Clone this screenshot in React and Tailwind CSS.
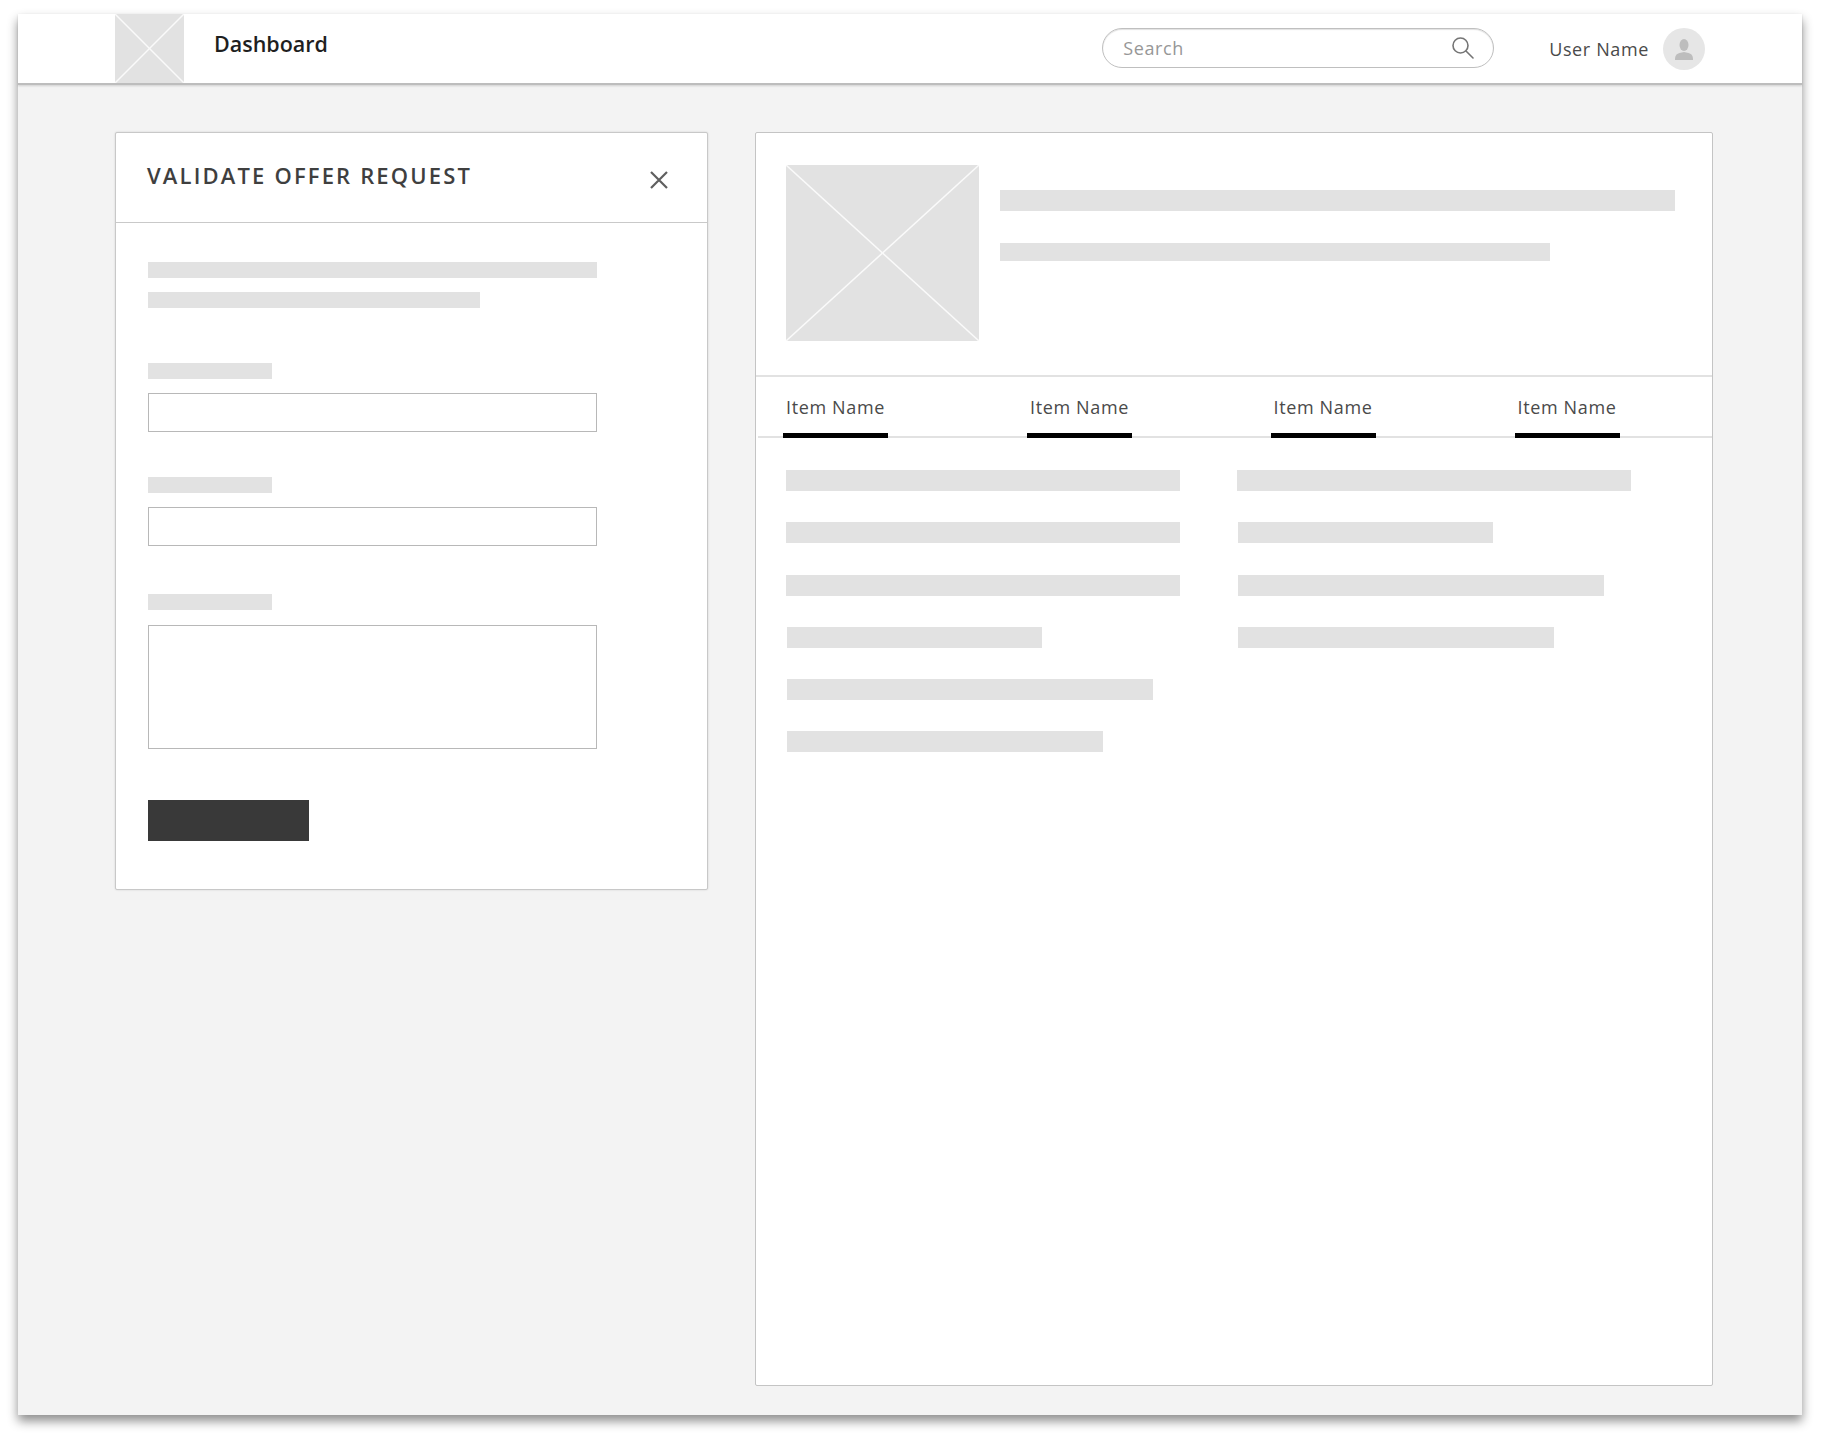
const ImagePlaceholder = ({ className }) => (
  <div className={`bg-[#e2e2e2] shrink-0 ${className}`}>
    <svg className="w-full h-full block" viewBox="0 0 100 100" preserveAspectRatio="none">
      <line x1="0" y1="0" x2="100" y2="100" stroke="#fafafa" strokeWidth="1.5" vectorEffect="non-scaling-stroke" />
      <line x1="100" y1="0" x2="0" y2="100" stroke="#fafafa" strokeWidth="1.5" vectorEffect="non-scaling-stroke" />
    </svg>
  </div>
)

const Bar = ({ className }) => <div className={`bg-[#e2e2e2] ${className}`}></div>

const tabs = [
  { name: 'Item Name', margin: 'ml-[25px]' },
  { name: 'Item Name', margin: 'ml-[139px]' },
  { name: 'Item Name', margin: 'ml-[138.5px]' },
  { name: 'Item Name', margin: 'ml-[139px]' },
]

const leftRows = ['w-[394px]', 'w-[394px]', 'w-[394px]', 'ml-px w-[255px]', 'ml-px w-[366px]', 'ml-px w-[316px]']
const rightRows = ['w-[394px]', 'ml-px w-[255px]', 'ml-px w-[366px]', 'ml-px w-[316px]']

const App = () => {
  return (
    <div className="w-[1821px] h-[1433px] bg-white pt-[14px] pl-[18px] overflow-hidden font-['Open_Sans',sans-serif]">
      <div className="w-[1784px] h-[1401px] bg-[#f3f3f3] shadow-[0_6px_10px_rgba(0,0,0,0.45)]">
        <header className="h-[71px] bg-white border-b-2 border-[#bdbdbd] shadow-[0_1px_2px_rgba(0,0,0,0.15)] flex items-start pl-[97px] pr-[97px]">
          <ImagePlaceholder className="w-[69px] h-[69px]" />
          <h1 className="ml-[30px] mt-[15px] text-[21.5px] leading-[30px] font-semibold text-[#1f1f1f]">Dashboard</h1>
          <div className="ml-auto mt-[14px] w-[392px] h-[40px] rounded-full border border-[#bfbfbf] shadow-[inset_0_1px_1px_rgba(0,0,0,0.12)] flex items-center pl-[20px] pr-[19px]">
            <span className="text-[18px] tracking-[0.035em] text-[#979797]">Search</span>
            <svg className="ml-auto" width="22" height="22" viewBox="0 0 22 22" fill="none" stroke="#757575" strokeWidth="1.6" strokeLinecap="round">
              <circle cx="8.5" cy="8.500" r="7.500" />
              <path d="M14 14l7 7" />
            </svg>
          </div>
          <span className="ml-[55px] mt-[20px] text-[18px] leading-[30px] tracking-[0.035em] text-[#4a4a4a]">User Name</span>
          <div className="ml-[14px] mt-[14px] w-[42px] h-[42px] rounded-full bg-[#e6e6e6] flex items-center justify-center">
            <svg width="20" height="21" viewBox="0 0 20 21" fill="#bdbdbd">
              <ellipse cx="10" cy="6" rx="4.500" ry="6" />
              <path d="M1 21c0-4 1-6 4.500-7l4.500-1 4.500 1c3.500 1 4.500 3 4.500 7z" />
            </svg>
          </div>
        </header>

        <main className="flex items-start pl-[97px] pt-[47px] gap-[47px]">
          <section className="w-[593px] h-[758px] bg-white border border-[#c8c8c8] shadow-[0_0_2px_rgba(0,0,0,0.15)] rounded-[2px]">
            <div className="h-[90px] border-b border-[#c9c9c9] relative">
              <h2 className="pl-[31px] pt-[27px] text-[22px] leading-[30px] font-semibold tracking-[0.098em] text-[#3f3f3f] whitespace-nowrap">VALIDATE OFFER REQUEST</h2>
              <svg className="absolute left-[534px] top-[38px]" width="18" height="18" viewBox="0 0 18 18" stroke="#5f5f5f" strokeWidth="2.2" fill="none">
                <path d="M1 1l16 16M17 1L1 17" />
              </svg>
            </div>
            <div className="pl-[32px] pt-[39px]">
              <Bar className="w-[449px] h-[16px]" />
              <Bar className="w-[332px] h-[16px] mt-[14px]" />
              <Bar className="w-[124px] h-[16px] mt-[55px]" />
              <div className="w-[449px] h-[39px] mt-[14px] border border-[#b8b8b8]"></div>
              <Bar className="w-[124px] h-[16px] mt-[45px]" />
              <div className="w-[449px] h-[39px] mt-[14px] border border-[#b8b8b8]"></div>
              <Bar className="w-[124px] h-[16px] mt-[48px]" />
              <div className="w-[449px] h-[124px] mt-[15px] border border-[#b8b8b8]"></div>
              <div className="w-[161px] h-[41px] mt-[51px] bg-[#393939]"></div>
            </div>
          </section>

          <section className="w-[958px] h-[1254px] bg-white border border-[#c4c4c4] rounded-[2px]">
            <div className="h-[244px] flex items-start pl-[30px] pt-[32px] border-b-2 border-[#e2e2e2]">
              <ImagePlaceholder className="w-[193px] h-[176px]" />
              <div className="ml-[21px] pt-[25px]">
                <Bar className="w-[675px] h-[21px]" />
                <Bar className="w-[550px] h-[18px] mt-[32px]" />
              </div>
            </div>
            <nav className="h-[61px] ml-[2px] flex items-end border-b-2 border-[#e2e2e2]">
              {tabs.map((tab, index) => (
                <div key={index} className={`w-[105px] h-[61px] -mb-[2px] border-b-[5px] border-black text-center ${tab.margin}`}>
                  <span className="block pt-[17px] text-[18px] leading-[27px] tracking-[0.035em] text-[#4a4a4a]">{tab.name}</span>
                </div>
              ))}
            </nav>
            <div className="flex pl-[30px] pt-[32px] gap-[57px]">
              <div className="w-[394px] flex flex-col gap-[31.3px]">
                {leftRows.map((row, index) => (
                  <Bar key={index} className={`h-[21px] ${row}`} />
                ))}
              </div>
              <div className="w-[394px] flex flex-col gap-[31.3px]">
                {rightRows.map((row, index) => (
                  <Bar key={index} className={`h-[21px] ${row}`} />
                ))}
              </div>
            </div>
          </section>
        </main>
      </div>
    </div>
  )
}

export default App
